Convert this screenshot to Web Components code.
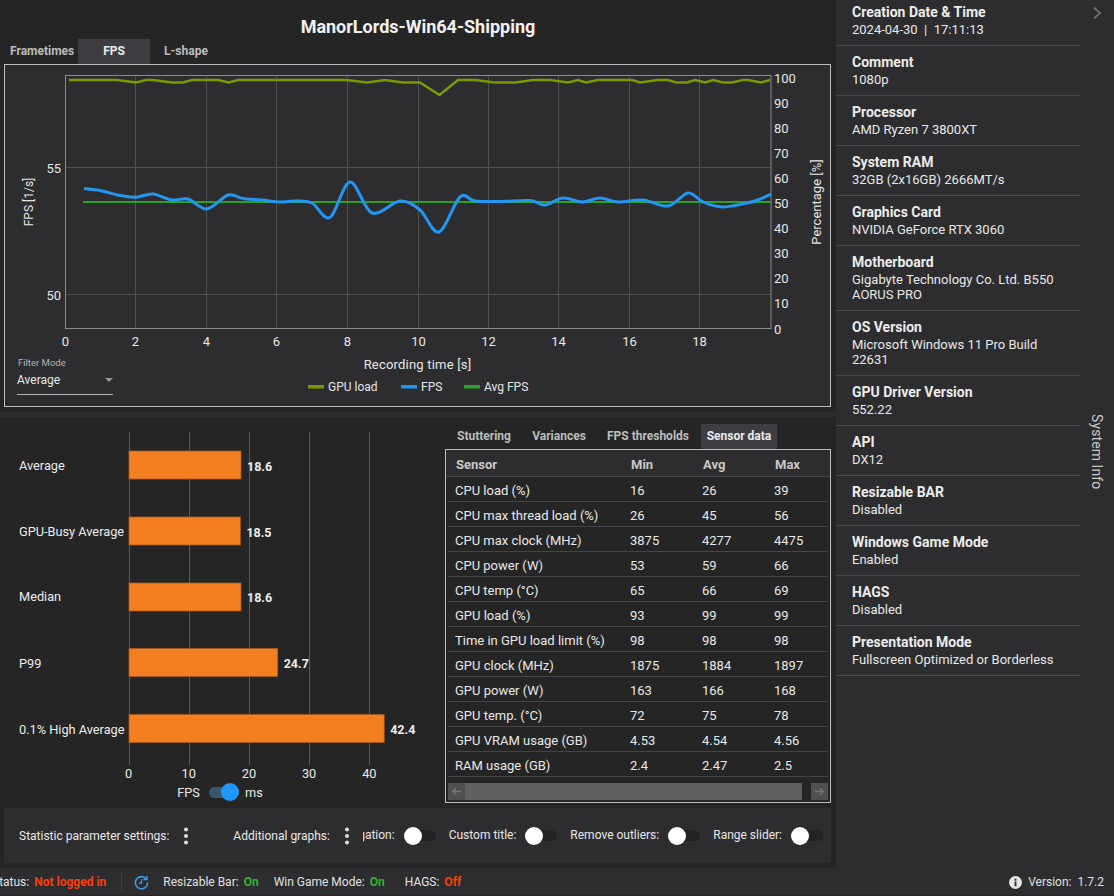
<!DOCTYPE html>
<html>
<head>
<meta charset="utf-8">
<title>CapFrameX</title>
<style>
  html, body { margin: 0; height: 896px; overflow: hidden; background: #252526; color: #f0f0f0; font-family: Roboto, sans-serif; }
</style>
</head>
<body>
<app-shell>
  <tab-strip slot="main-tabs" pad="10" items="Frametimes:68,FPS:72,L-shape:72" active="FPS"></tab-strip>
  <line-chart slot="chart"></line-chart>
  <bar-chart slot="bars"></bar-chart>
  <tab-strip slot="table-tabs" items="Stuttering:78,Variances:72,FPS thresholds:106,Sensor data:76" active="Sensor data" small></tab-strip>
  <sensor-table slot="table"></sensor-table>
  <settings-bar slot="settings"></settings-bar>
  <info-panel slot="side">
    <info-item label="Creation Date &amp; Time">2024-04-30&nbsp; |&nbsp; 17:11:13</info-item>
    <info-item label="Comment">1080p</info-item>
    <info-item label="Processor">AMD Ryzen 7 3800XT</info-item>
    <info-item label="System RAM">32GB (2x16GB) 2666MT/s</info-item>
    <info-item label="Graphics Card">NVIDIA GeForce RTX 3060</info-item>
    <info-item label="Motherboard">Gigabyte Technology Co. Ltd. B550 AORUS PRO</info-item>
    <info-item label="OS Version">Microsoft Windows 11 Pro Build 22631</info-item>
    <info-item label="GPU Driver Version">552.22</info-item>
    <info-item label="API">DX12</info-item>
    <info-item label="Resizable BAR">Disabled</info-item>
    <info-item label="Windows Game Mode">Enabled</info-item>
    <info-item label="HAGS">Disabled</info-item>
    <info-item label="Presentation Mode">Fullscreen Optimized or Borderless</info-item>
  </info-panel>
  <status-bar slot="status"></status-bar>
</app-shell>

<script>
class AppShell extends HTMLElement {
  constructor() {
    super();
    this.attachShadow({ mode: 'open' }).innerHTML = `
      <style>
        :host { display: grid; grid-template-columns: 836px 278px; grid-template-rows: 868px 28px; width: 1114px; height: 896px; }
        .left { display: flex; flex-direction: column; min-width: 0; }
        h1 { margin: 0; height: 39px; font: 700 18px/53px Roboto, sans-serif; text-align: center; color: #f1f1f1; }
        .box { margin: 0 5px 0 4px; }
        .split { height: 5px; margin-top: 5px; background: #2d2d30; }
        .lower { display: flex; height: 391px; }
        .right { width: 386px; padding-top: 7px; box-sizing: border-box; }
        .status { grid-column: 1 / 3; }
        .side { background: #2d2d30; overflow: hidden; }
      </style>
      <div class="left">
        <h1>ManorLords-Win64-Shipping</h1>
        <slot name="main-tabs"></slot>
        <div class="box"><slot name="chart"></slot></div>
        <div class="split"></div>
        <div class="lower">
          <slot name="bars"></slot>
          <div class="right">
            <slot name="table-tabs"></slot>
            <slot name="table"></slot>
          </div>
        </div>
        <div class="box"><slot name="settings"></slot></div>
      </div>
      <div class="side"><slot name="side"></slot></div>
      <div class="status"><slot name="status"></slot></div>
    `;
  }
}
customElements.define('app-shell', AppShell);

class TabStrip extends HTMLElement {
  connectedCallback() {
    const shadow = this.attachShadow({ mode: 'open' });
    const active = this.getAttribute('active');
    const pad = this.getAttribute('pad') || 0;
    const tabs = this.getAttribute('items').split(',').map(item => {
      const [name, width] = item.split(':');
      return `<div class="tab ${name === active ? 'on' : ''}" style="width:${width}px">${name}</div>`;
    }).join('');
    shadow.innerHTML = `
      <style>
        :host { display: flex; height: 25px; padding-left: ${pad}px; }
        .tab { height: 25px; font: 700 12px/25px Roboto, sans-serif; color: #bdbdbd; text-align: center; white-space: nowrap; }
        :host(:not([small])) .tab:first-of-type { text-align: left; }
        .on { background: #3e3e42; color: #ececec; }
      </style>
      ${tabs}
    `;
  }
}
customElements.define('tab-strip', TabStrip);

// smooth line through the points, the plot draws the fps curve with it
function smoothPath(pts) {
  let d = `M${pts[0][0]} ${pts[0][1]}`;
  for (let i = 0; i < pts.length - 1; i++) {
    const p0 = pts[Math.max(i - 1, 0)], p1 = pts[i], p2 = pts[i + 1], p3 = pts[Math.min(i + 2, pts.length - 1)];
    const c1 = [p1[0] + (p2[0] - p0[0]) / 6, p1[1] + (p2[1] - p0[1]) / 6];
    const c2 = [p2[0] - (p3[0] - p1[0]) / 6, p2[1] - (p3[1] - p1[1]) / 6];
    d += `C${c1[0].toFixed(1)} ${c1[1].toFixed(1)} ${c2[0].toFixed(1)} ${c2[1].toFixed(1)} ${p2[0]} ${p2[1]}`;
  }
  return d;
}

const GPU_LOAD = [[69,80],[117,80],[136,82.5],[146,80],[153,80],[172,82.5],[183,82.5],[192,80],[218,80],[229,82.5],[238,80],[347,80],[367,82.5],[385,80],[403,82.5],[420,82.5],[439.5,95],[458,80],[475,80],[495,82.5],[515,82.5],[533,80],[550,80],[568,82.5],[578,80],[586,82.5],[598,80],[632,80],[640,82.5],[658,80],[668,80],[676,82.5],[687,82.5],[695,80],[705,82.5],[713,80],[723,82.5],[732,82.5],[743,80],[748,80],[761,82.5],[770,80]];
const FPS_LINE = [[84,188.5],[100,190.5],[118,195],[130,197],[138,197],[153,194],[172,200],[188,199],[207,209],[228,195],[243,198.5],[262,200],[280,202],[295,201],[312,203],[330,217.5],[350,182],[372,213],[400,201],[420,210],[439,232],[460,197],[475,201],[500,201.5],[530,200.5],[545,205],[563,198],[582,202],[600,198],[618,202],[643,200],[668,206],[688,193],[703,202],[722,207],[747,203],[758,200],[771,194]];

class LineChart extends HTMLElement {
  constructor() {
    super();
    const shadow = this.attachShadow({ mode: 'open' });
    const xs = [135.5, 206.5, 276.5, 347.5, 418.5, 488.5, 558.5, 629.5, 699.5];
    const grid = xs.map(x => `<path d="M${x} 75.5V328.5"/>`).join('');
    const xLabels = [0, 2, 4, 6, 8, 10, 12, 14, 16, 18].map((v, i) =>
      `<text x="${i === 0 ? 65.5 : xs[i - 1]}" y="346" text-anchor="middle">${v}</text>`).join('');
    const pct = [100, 90, 80, 70, 60, 50, 40, 30, 20, 10, 0].map((v, i) =>
      `<text x="774" y="${83 + i * 25.05}">${v}</text>`).join('');
    const legend = [[308, 'GPU load', '#7a9a01'], [401, 'FPS', '#2196f3'], [464, 'Avg FPS', '#2ca02c']].map(([x, t, c]) =>
      `<rect x="${x}" y="385" width="16" height="3.5" fill="${c}"/><text x="${x + 20}" y="391" font-size="12">${t}</text>`).join('');
    shadow.innerHTML = `
      <style>
        :host { display: grid; box-sizing: border-box; height: 343px; border: 1px solid #bdbdbd; background: #2d2d30; }
        svg { grid-area: 1 / 1; display: block; font-family: Roboto, sans-serif; font-size: 13px; }
        text { fill: #e6e6e6; }
        .grid path { stroke: #505053; stroke-width: 1; fill: none; }
        filter-select { grid-area: 1 / 1; justify-self: start; align-self: end; margin: 0 0 11px 12px; }
      </style>
      <svg width="825" height="341" viewBox="5 65 825 341">
        <g class="grid">${grid}<path d="M65.5 167.5H771M65.5 294.5H771"/></g>
        <rect x="65.5" y="75.5" width="705.5" height="253" fill="none" stroke="#8a8a8a"/>
        <polyline points="${GPU_LOAD.join(' ')}" fill="none" stroke="#7a9a01" stroke-width="2.5"/>
        <path d="M83 202H771" stroke="#2ca02c" stroke-width="2" fill="none"/>
        <path d="${smoothPath(FPS_LINE)}" fill="none" stroke="#2196f3" stroke-width="3"/>
        <text x="61" y="173" text-anchor="end">55</text>
        <text x="61" y="300" text-anchor="end">50</text>
        ${xLabels}${pct}
        <text x="417.5" y="369" text-anchor="middle" letter-spacing="0.2">Recording time [s]</text>
        <text transform="translate(33 202) rotate(-90)" text-anchor="middle" font-size="12">FPS [1/s]</text>
        <text transform="translate(821 202) rotate(-90)" text-anchor="middle">Percentage [%]</text>
        ${legend}
      </svg>
      <filter-select label="Filter Mode" value="Average"></filter-select>
    `;
  }
}
customElements.define('line-chart', LineChart);

class FilterSelect extends HTMLElement {
  constructor() {
    super();
    this.attachShadow({ mode: 'open' }).innerHTML = `
      <style>
        :host { display: block; width: 96px; font-family: Roboto, sans-serif; }
        .label { font-size: 9.5px; line-height: 12px; color: #b4b4b4; padding-left: 1px; }
        .value { display: flex; justify-content: space-between; align-items: center; height: 22px; border-bottom: 1px solid #b8b8b8; font-size: 12px; color: #e8e8e8; padding-bottom: 3px; }
        .arrow { width: 0; height: 0; border: 4px solid transparent; border-top: 4px solid #9a9a9a; border-bottom: 0; }
      </style>
      <div class="label">${this.getAttribute('label')}</div>
      <div class="value"><span>${this.getAttribute('value')}</span><span class="arrow"></span></div>
    `;
  }
}
customElements.define('filter-select', FilterSelect);

class ToggleSwitch extends HTMLElement {
  constructor() {
    super();
    this.attachShadow({ mode: 'open' }).innerHTML = `
      <style>
        :host { display: inline-flex; align-items: center; width: 32px; height: 18px; flex: none; }
        .track { flex: 1; height: 11px; margin-left: 2px; border-radius: 6px; background: #232326; display: flex; align-items: center; }
        .knob { width: 18px; height: 18px; margin-left: -2px; border-radius: 50%; background: #fff; }
        :host([on]) { width: 30px; }
        :host([on]) .track { background: #37566f; margin-left: 0; justify-content: flex-end; }
        :host([on]) .knob { background: #2196f3; margin: 0; }
      </style>
      <div class="track"><div class="knob"></div></div>
    `;
  }
}
customElements.define('toggle-switch', ToggleSwitch);

class BarChart extends HTMLElement {
  constructor() {
    super();
    const shadow = this.attachShadow({ mode: 'open' });
    const rows = [['Average', 18.6, 451, 0], ['GPU-Busy Average', 18.5, 517, 0], ['Median', 18.6, 583, -1], ['P99', 24.7, 648.5, 0], ['0.1% High Average', 42.4, 714.5, 0]];
    const scale = 6.02;
    const ticks = [0, 10, 20, 30, 40];
    const bars = rows.map(([name, val, y, nudge]) => {
      const w = val * scale;
      return `<text x="19" y="${y + 19 + nudge}">${name}</text>
        <rect x="129" y="${y}" width="${w.toFixed(1)}" height="28" fill="#f47f20" stroke="#a85a1c" stroke-width="0.8"/>
        <text x="${(129 + w + 6).toFixed(1)}" y="${y + 19.5 + nudge}" font-weight="700" font-size="12.5">${val}</text>`;
    }).join('');
    const axis = ticks.map(t => {
      const x = 128.5 + t * 6.02;
      return `<path d="M${x.toFixed(0)}.5 432V765" stroke="#5a5a5a"/><text x="${x.toFixed(1)}" y="778" text-anchor="middle">${t}</text>`;
    }).join('');
    shadow.innerHTML = `
      <style>
        :host { display: flex; flex-direction: column; width: 445px; flex: none; font-family: Roboto, sans-serif; font-size: 12.75px; color: #e8e8e8; }
        svg { display: block; font-size: 12.75px; }
        text { fill: #ececec; }
        .unit { display: flex; align-items: center; justify-content: center; gap: 9px; height: 18px; padding-right: 5px; }
        .unit span:last-child { margin-left: -3px; }
      </style>
      <svg width="445" height="366" viewBox="0 417 445 366">${axis}${bars}</svg>
      <div class="unit"><span>FPS</span><toggle-switch on></toggle-switch><span>ms</span></div>
    `;
  }
}
customElements.define('bar-chart', BarChart);

class SensorTable extends HTMLElement {
  constructor() {
    super();
    const shadow = this.attachShadow({ mode: 'open' });
    const data = [
      ['CPU load (%)', 16, 26, 39], ['CPU max thread load (%)', 26, 45, 56], ['CPU max clock (MHz)', 3875, 4277, 4475],
      ['CPU power (W)', 53, 59, 66], ['CPU temp (°C)', 65, 66, 69], ['GPU load (%)', 93, 99, 99],
      ['Time in GPU load limit (%)', 98, 98, 98], ['GPU clock (MHz)', 1875, 1884, 1897], ['GPU power (W)', 163, 166, 168],
      ['GPU temp. (°C)', 72, 75, 78], ['GPU VRAM usage (GB)', 4.53, 4.54, 4.56], ['RAM usage (GB)', 2.4, 2.47, 2.5]
    ];
    const rows = data.map(r => `<div class="row">${r.map(v => `<span>${v}</span>`).join('')}</div>`).join('');
    shadow.innerHTML = `
      <style>
        :host { display: block; box-sizing: border-box; width: 386px; height: 354px; padding: 0 2px; border: 1px solid #bdbdbd; background: #252526; font: 13px Roboto, sans-serif; color: #e8e8e8; }
        .row { display: grid; grid-template-columns: 175px 72px 72px 1fr; align-items: center; height: 25px; padding: 2px 0 0 7px; border-bottom: 1px solid #444447; box-sizing: border-box; }
        .head { height: 27px; background: #2d2d30; margin: 0 -2px; padding: 1px 0 0 10px; font-weight: 700; color: #c8c8c8; border-bottom: 0; box-shadow: inset 0 -1px #444447; }
        .scroll { display: flex; height: 17px; margin-top: 6px; gap: 9px; }
        .btn { width: 17px; height: 17px; background: #505052; display: grid; place-items: center; }
        .thumb { display: flex; width: 354px; flex: none; background: #5f5f5f; }
        svg { width: 11px; height: 11px; fill: none; stroke: #757575; stroke-width: 1.6; }
      </style>
      <div class="row head"><span>Sensor</span><span>Min</span><span>Avg</span><span>Max</span></div>
      ${rows}
      <div class="scroll">
        <div class="thumb">
          <div class="btn"><svg viewBox="0 0 12 12"><path d="M11 6H2M5.500 2.500 2 6l3.500 3.500"/></svg></div>
        </div>
        <div class="btn"><svg viewBox="0 0 12 12"><path d="M1 6h9M6.500 2.500 10 6 6.500 9.500"/></svg></div>
      </div>
    `;
  }
}
customElements.define('sensor-table', SensorTable);

class MenuDots extends HTMLElement {
  constructor() {
    super();
    this.attachShadow({ mode: 'open' }).innerHTML = `
      <style>
        :host { display: inline-block; width: 6px; flex: none; }
        svg { display: block; }
      </style>
      <svg width="6" height="18" viewBox="0 0 6 18" fill="#e0e0e0"><circle cx="3" cy="2.500" r="2"/><circle cx="3" cy="9" r="2"/><circle cx="3" cy="15.500" r="2"/></svg>
    `;
  }
}
customElements.define('menu-dots', MenuDots);

class SettingsBar extends HTMLElement {
  constructor() {
    super();
    this.attachShadow({ mode: 'open' }).innerHTML = `
      <style>
        :host { display: flex; align-items: center; height: 55px; background: #2d2d30; font: 12px Roboto, sans-serif; color: #e8e8e8; white-space: nowrap; }
        .fixed { display: flex; align-items: center; flex: none; width: 359px; padding-left: 15px; box-sizing: border-box; }
        .fixed span:nth-of-type(2) { margin-left: 44px; }
        .fixed menu-dots { margin-left: 14px; }
        .scroller { display: flex; justify-content: flex-end; align-items: center; flex: 1; min-width: 0; overflow: hidden; padding-right: 8px; gap: 13px; }
        .opt { display: flex; align-items: center; gap: 9px; flex: none; }
        .opt span { margin-top: -2px; }
      </style>
      <div class="fixed"><span>Statistic parameter settings:</span><menu-dots></menu-dots><span>Additional graphs:</span><menu-dots></menu-dots></div>
      <div class="scroller">
        <div class="opt"><span>Aggregation:</span><toggle-switch></toggle-switch></div>
        <div class="opt"><span>Custom title:</span><toggle-switch></toggle-switch></div>
        <div class="opt"><span>Remove outliers:</span><toggle-switch></toggle-switch></div>
        <div class="opt"><span>Range slider:</span><toggle-switch></toggle-switch></div>
      </div>
    `;
  }
}
customElements.define('settings-bar', SettingsBar);

class InfoItem extends HTMLElement {
  constructor() {
    super();
    this.attachShadow({ mode: 'open' }).innerHTML = `
      <style>
        :host { display: block; box-sizing: border-box; width: 244px; padding: 8px 16px; border-bottom: 1px solid #4a4a4d; font: 13px/15px Roboto, sans-serif; color: #e8e8e8; }
        .label { font-weight: 700; font-size: 14px; line-height: 16px; color: #ececec; padding-bottom: 2px; }
      </style>
      <div class="label">${this.getAttribute('label')}</div>
      <slot></slot>
    `;
  }
}
customElements.define('info-item', InfoItem);

class InfoPanel extends HTMLElement {
  constructor() {
    super();
    this.attachShadow({ mode: 'open' }).innerHTML = `
      <style>
        :host { display: flex; height: 868px; background: #2d2d30; font-family: Roboto, sans-serif; }
        .list { width: 244px; flex: none; margin-top: -4px; }
        .rail { flex: 1; display: flex; flex-direction: column; align-items: center; justify-content: space-between; }
        .chev { margin: 6px 0 0 0; }
        .name { writing-mode: vertical-rl; font-size: 14px; letter-spacing: 0.1px; color: #c8c8c8; margin-bottom: 379px; }
      </style>
      <div class="list"><slot></slot></div>
      <div class="rail">
        <svg class="chev" width="10" height="14" viewBox="0 0 10 14" fill="none" stroke="#6e6e6e" stroke-width="1.8"><path d="M2 1.500 8 7l-6 5.500"/></svg>
        <div class="name">System Info</div>
      </div>
    `;
  }
}
customElements.define('info-panel', InfoPanel);

class StatusBar extends HTMLElement {
  constructor() {
    super();
    this.attachShadow({ mode: 'open' }).innerHTML = `
      <style>
        :host { display: flex; align-items: center; box-sizing: border-box; height: 27px; padding-top: 1px; background: #2d2d30; font: 12px Roboto, sans-serif; color: #e0e0e0; white-space: nowrap; overflow: hidden; }
        b { font-weight: 700; margin-left: 5px; }
        .red { color: #ff3d00; }
        .green { color: #2fb52f; }
        .sep { width: 1px; height: 20px; background: #3e3e42; margin: 0 12px 0 15px; flex: none; }
        .first { margin-left: -8px; }
        .hist { margin-right: 14px; display: block; flex: none; }
        .ver { margin-left: auto; display: flex; align-items: center; gap: 6px; padding-right: 10px; }
      </style>
      <span class="first">Status:</span><b class="red">Not logged in</b>
      <span class="sep"></span>
      <svg class="hist" width="15" height="15" viewBox="0 0 16 16" fill="none" stroke="#3f97e6" stroke-width="1.7"><path d="M13.200 4.300A6.500 6.500 0 1 0 14.500 8"/><path d="M13.800 1v3.800H10" stroke-width="1.500"/><path d="M8 4.500V8.500H5.300" stroke-width="1.400"/></svg>
      <span style="margin-right:15px"><span>Resizable Bar:</span><b class="green">On</b></span>
      <span style="margin-right:20px"><span>Win Game Mode:</span><b class="green">On</b></span>
      <span><span>HAGS:</span><b class="red">Off</b></span>
      <span class="ver">
        <svg width="13" height="13" viewBox="0 0 14 14"><circle cx="7" cy="7" r="7" fill="#e6e6e6"/><path d="M6 6h2v5H6zM6 3h2v2H6z" fill="#2d2d30"/></svg>
        <span>Version: &nbsp;1.7.2</span>
      </span>
    `;
  }
}
customElements.define('status-bar', StatusBar);
</script>
</body>
</html>
